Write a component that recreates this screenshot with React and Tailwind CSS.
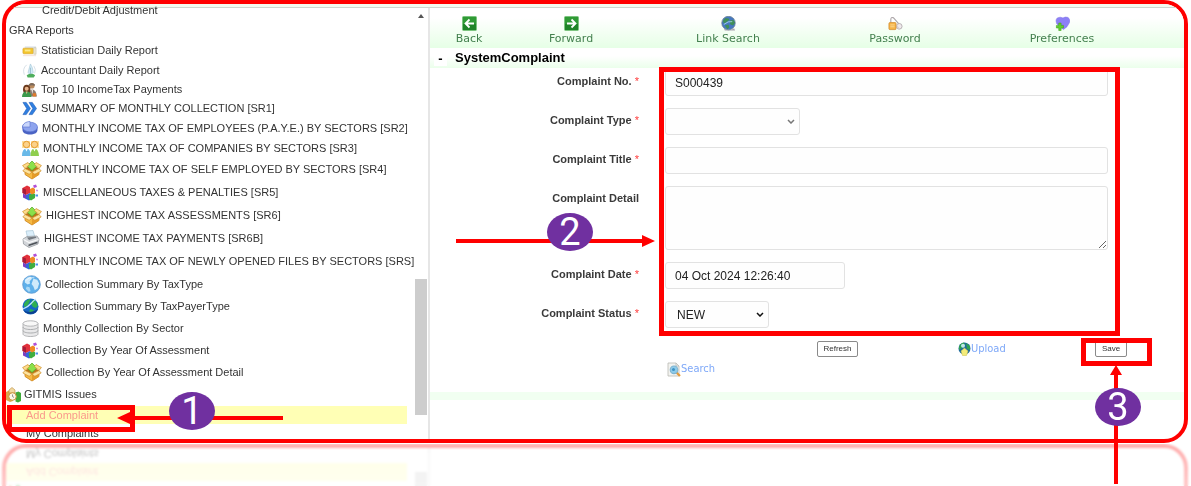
import React from 'react';

/* ---------- icons ---------- */

function TicketIcon({ className }) {
  return (
    <svg viewBox="0 0 16 16" className={className} aria-hidden="true">
      <rect x="3" y="3.500" width="12" height="3" fill="#dfe6ee" />
      <rect x="1" y="5.500" width="11" height="6" rx="1" fill="#f3c52b" stroke="#d9a52b" strokeWidth=".7" />
      <rect x="3" y="7" width="6" height="2" fill="#fbe98a" />
      <path d="M12.500 5H15v7h-2.500z" fill="#efe9d2" stroke="#b9b49a" strokeWidth=".5" />
      <path d="M1 13.500h14" stroke="#f2dfd8" />
    </svg>
  );
}

function AntennaIcon({ className }) {
  return (
    <svg viewBox="0 0 16 16" className={className} aria-hidden="true">
      <path d="M5 2Q0 6 2.500 12.500M12.500 3q3 4 1 8" fill="none" stroke="#d4dfe6" />
      <path d="M9 1l2 4 1 5-3 3-2.500-3L8 4.500z" fill="#d3ebf6" stroke="#9fc3d4" strokeWidth=".6" />
      <path d="M5 13q5-3 9 0l-1.500 2.500H6z" fill="#4fae5c" />
      <path d="M9 5v7" stroke="#7fa9bd" strokeWidth=".7" />
    </svg>
  );
}

function PeopleIcon({ className }) {
  return (
    <svg viewBox="0 0 16 16" className={className} aria-hidden="true">
      <circle cx="10.500" cy="4" r="3" fill="#b98a5e" />
      <path d="M7 3q3.500-4 7 0l-.5 1q-3-1-6 0z" fill="#7b6a5c" />
      <path d="M7 15.500Q7 8 11 8t5 7.500z" fill="#8a7b70" />
      <path d="M10 8l1 5 1-5z" fill="#e9e2da" />
      <path d="M1 8.500Q1 3 5 3t4 5.500L8 12H2z" fill="#6b3a1d" />
      <circle cx="5" cy="7.200" r="2.100" fill="#e8b58c" />
      <path d="M0 16q0-6 5-6t5 6z" fill="#3c9a4c" />
      <path d="M4 10l1 3 1-3z" fill="#e8b58c" />
      <path d="M11.500 12H15v3.500h-3.500z" fill="#e07b2c" />
    </svg>
  );
}

function ChevronsIcon({ className }) {
  return (
    <svg viewBox="0 0 16 16" className={className} aria-hidden="true">
      <path d="M1 1.500h3.500L9 8l-4.500 6.500H1L5 8z" fill="#2f7fe0" stroke="#1d59b5" strokeWidth=".6" />
      <path d="M7.500 1.500H11L15.500 8 11 14.500H7.500l4-6.500z" fill="#2f7fe0" stroke="#1d59b5" strokeWidth=".6" />
    </svg>
  );
}

function PieIcon({ className }) {
  return (
    <svg viewBox="0 0 16 16" className={className} aria-hidden="true">
      <path d="M.5 7v3c0 3 3.500 4.500 7.500 4.500s7.500-1.500 7.500-4.500V7z" fill="#4a63c4" />
      <ellipse cx="8" cy="7" rx="7.500" ry="4.800" fill="#8ea4ee" stroke="#5871cf" strokeWidth=".6" />
      <path d="M8 7V1.500C4 1.500.5 4 .5 7z" fill="#c9d6fb" stroke="#5871cf" strokeWidth=".6" />
    </svg>
  );
}

function PairIcon({ className }) {
  return (
    <svg viewBox="0 0 17 16" className={className} aria-hidden="true">
      <path d="M0 1h8v7H0zM9 1h8v7H9z" fill="#fbdf9c" />
      <circle cx="4.500" cy="4.500" r="3.200" fill="#fbd28a" stroke="#e79a2c" strokeWidth="1" />
      <circle cx="12.500" cy="4.500" r="3.200" fill="#fbd28a" stroke="#e79a2c" strokeWidth="1" />
      <path d="M0 16q0-7.500 4.500-7.500t4 7.500z" fill="#69b9e8" />
      <path d="M8.500 16q0-7.500 4-7.500T17 16z" fill="#8fce4e" />
      <path d="M3 8.500l1.500 3 1.500-3zM11 8.500l1.500 3 1.500-3z" fill="#fff" />
    </svg>
  );
}

function BoxIcon({ className }) {
  return (
    <svg viewBox="0 0 20 20" className={className} aria-hidden="true">
      <path d="M3 8.500l7 3.500 7-3.500v6L10 19l-7-4.500z" fill="#f5b942" stroke="#c9801c" strokeWidth=".8" />
      <path d="M10 12v7l7-4.500v-6z" fill="#e59c2a" />
      <path d="M3 8.500L10 4.500l7 4-7 3.500z" fill="#b9741a" />
      <path d="M10 1l5 5-5 4.500L5 6z" fill="#8be04a" stroke="#4fa525" strokeWidth=".7" />
      <path d="M3 8.500L.6 5.500 6 2.500l1.500 2zM17 8.500l2.400-3L14 2.500l-1.500 2z" fill="#fcdc8a" stroke="#d08f2a" strokeWidth=".7" />
      <path d="M3 8.500L.8 11l6.400 3.300L10 12zM17 8.500l2.200 2.500-6.400 3.300L10 12z" fill="#fde3a0" stroke="#d08f2a" strokeWidth=".7" />
    </svg>
  );
}

function BlocksIcon({ className }) {
  return (
    <svg viewBox="0 0 17 17" className={className} aria-hidden="true">
      <path d="M.5 4l4.500-2.500L8 3v6L4 11 .5 9z" fill="#e2323c" />
      <path d="M.5 4L4 5.500V11L.5 9z" fill="#a81c38" />
      <path d="M1 9.500L4 11v4l-3-1.500z" fill="#7a3fc0" />
      <path d="M4 11l4-2 2 1.500V15l-3 1.500L4 15z" fill="#3566d8" />
      <path d="M7 11l4-2 2 1v4l-4 2.500L7 15z" fill="#3fae3f" />
      <path d="M8 5l3-1.500L13 5v4l-3 1.500L8 9z" fill="#f08a24" />
      <path d="M11 1.500l3-1 1 2.500-3 1z" fill="#b14fd8" />
      <path d="M14.500 5.500l1.500.5-.5 1.500-1.500-.5z" fill="#cf7be6" />
      <path d="M13.500 10.500h2.500v2h-2.500z" fill="#4c8fe8" />
    </svg>
  );
}

function PrinterIcon({ className }) {
  return (
    <svg viewBox="0 0 18 18" className={className} aria-hidden="true">
      <path d="M4 1l7-.5 2 7-7 2z" fill="#dbeefa" stroke="#9dbdd0" strokeWidth=".6" />
      <path d="M1 9l4-2.500 10-.5 2 3-1 5-9 3.500L1.500 14z" fill="#d3d6da" stroke="#8b9096" strokeWidth=".7" />
      <path d="M1.500 9.500L7 12.500l9.500-3" fill="none" stroke="#f7f8f9" strokeWidth="1.200" />
      <path d="M6.500 14.500l9-3v1.800l-9 3z" fill="#4e5359" />
      <path d="M5 7.500l8.500-1 1 1.200L7 10z" fill="#747a81" />
    </svg>
  );
}

function SkyGlobeIcon({ className }) {
  return (
    <svg viewBox="0 0 20 20" className={className} aria-hidden="true">
      <circle cx="10" cy="10" r="9.300" fill="#5fb0ea" stroke="#5a97cf" strokeWidth=".8" />
      <path d="M3 5q3-3.500 6.500-3l1 2-2.500 2.500L8.500 9 6 10 3 8zM12 4l4 1 2 4-1.500 5-3 2-1.500-4L10 9.500z" fill="#cfeafb" />
      <path d="M5 12l3 1 1 4-2 .5-3-3z" fill="#a9d8f5" />
      <path d="M4 6Q7 2 13 3" fill="none" stroke="#fff" strokeWidth="1" opacity=".7" />
    </svg>
  );
}

function DeepGlobeIcon({ className }) {
  return (
    <svg viewBox="0 0 17 17" className={className} aria-hidden="true">
      <circle cx="8.500" cy="8.500" r="8" fill="#1668c4" />
      <path d="M2 6q2-4.500 6.500-5l-1 3-2 3.500L2 9zM10 2l3.500 1L16 7.500l-2 2.500-3-1-2-3zM8 11l4 1-2 3.500-3-.5z" fill="#2faf52" />
      <path d="M1 11Q6 9 9 5.500T14 1" fill="none" stroke="#bfe8fb" strokeWidth="1.300" />
      <path d="M1 12q3 4 8 4t7-5q-4 3-8 3t-7-2z" fill="#0c3f90" />
    </svg>
  );
}

function DatabaseIcon({ className }) {
  return (
    <svg viewBox="0 0 17 17" className={className} aria-hidden="true">
      <path d="M1 3.500v10.500c0 1.500 3.300 2.500 7.500 2.500s7.500-1 7.500-2.500V3.500z" fill="#e9e9ea" stroke="#a4a6a8" strokeWidth=".8" />
      <path d="M1 7c0 1.500 3.300 2.500 7.500 2.500S16 8.500 16 7M1 10.500C1 12 4.300 13 8.500 13s7.500-1 7.500-2.500" fill="none" stroke="#a4a6a8" strokeWidth=".9" />
      <ellipse cx="8.500" cy="3.500" rx="7.500" ry="2.700" fill="#f8f8f8" stroke="#a4a6a8" strokeWidth=".8" />
    </svg>
  );
}

function IssuesIcon({ className }) {
  return (
    <svg viewBox="0 0 15 16" className={className} aria-hidden="true">
      <path d="M0 5l4-2 3 2v9l-3 1-4-2z" fill="#dba84e" />
      <path d="M3 3l3-2.500 3 2.500v3H3z" fill="#f2d9a0" stroke="#b98b3c" strokeWidth=".6" />
      <path d="M9.500 5.500l3-1L15 6v8l-3 1.500-2.500-1z" fill="#3faa3a" />
      <circle cx="6.500" cy="9.500" r="3.800" fill="#fdf7e6" stroke="#c89238" strokeWidth="1" />
      <path d="M6.500 7.500v2l1.500 1" fill="none" stroke="#777" strokeWidth=".8" />
    </svg>
  );
}

function ArrowTile({ className, forward }) {
  return (
    <svg viewBox="0 0 15 15" className={className} aria-hidden="true">
      <rect x=".5" y=".5" width="14" height="14" rx="1" fill="#2f9a35" stroke="#7cc47f" />
      <path d="M1 8h13v6H1z" fill="#1f8428" />
      <path
        d={forward ? 'M3 7.500h8.500M7.500 3.500l4 4-4 4' : 'M12 7.500H3.500M7.500 3.500l-4 4 4 4'}
        fill="none"
        stroke="#fff"
        strokeWidth="1.800"
      />
    </svg>
  );
}

const BackIcon = ({ className }) => <ArrowTile className={className} />;
const ForwardIcon = ({ className }) => <ArrowTile className={className} forward />;

function LinkGlobeIcon({ className }) {
  return (
    <svg viewBox="0 0 16 16" className={className} aria-hidden="true">
      <path d="M3 13q5 4 11 0l1 2.500H4z" fill="#a9a3b0" />
      <circle cx="8" cy="7.500" r="7.200" fill="#4677c2" stroke="#69808f" strokeWidth=".8" />
      <path d="M2 5l3-3 4 1-1 2-3 2-2 1zM9 5l4-1 2 3-2 3-3-1zM4 10l4-1 1 3-2 2z" fill="#3f8f57" />
      <path d="M3 9q5-4 9-3" fill="none" stroke="#a9d6ee" strokeWidth=".9" />
    </svg>
  );
}

function PasswordIcon({ className }) {
  return (
    <svg viewBox="0 0 16 16" className={className} aria-hidden="true">
      <path d="M3 7V4q0-3.500 3-2l6 7" fill="none" stroke="#aaa4a7" strokeWidth="1.200" />
      <circle cx="12" cy="11" r="3" fill="#efeaec" stroke="#b5aeb1" strokeWidth="1" />
      <path d="M7 8l5 6" stroke="#d3cdd0" strokeWidth="1.500" />
      <rect x="1" y="7" width="7.500" height="7.500" rx="1" fill="#f6b546" stroke="#d18a2c" strokeWidth=".8" />
      <path d="M2.500 9.500H7M2.500 11.500H7" stroke="#fbd894" />
    </svg>
  );
}

function PreferencesIcon({ className }) {
  return (
    <svg viewBox="0 0 16 16" className={className} aria-hidden="true">
      <path d="M9 14.500L2 8.500Q0 4 2.500 2q3-1.500 6 0Q11 .5 14 1.500q2.500 2 1.500 5.500-2 5-6.500 7.500z" fill="#8d80f6" stroke="#7b6de6" strokeWidth=".5" />
      <path d="M4 7.500h2.500V10H9v2.800H6.500V15.500H4v-2.700H1.500V10H4z" fill="#63cf2e" stroke="#3f9f1c" strokeWidth=".6" />
    </svg>
  );
}

function UploadIcon({ className }) {
  return (
    <svg viewBox="0 0 13 14" className={className} aria-hidden="true">
      <circle cx="6.500" cy="6.500" r="6" fill="#1f6c9c" />
      <path d="M1 5q1-4 5-4.500L7 3 4 6 1 8zM8 1l4 3v4l-3-1z" fill="#2fa152" />
      <circle cx="5" cy="3.800" r="2" fill="#bfe9e6" />
      <path d="M6.500 6l3.500 3-1.500 4.500h-4L3 9z" fill="#f4ec7a" stroke="#c9c04a" strokeWidth=".5" />
    </svg>
  );
}

function SearchPageIcon({ className }) {
  return (
    <svg viewBox="0 0 14 15" className={className} aria-hidden="true">
      <path d="M1 1h8l3 3v10H1z" fill="#f3f3f0" stroke="#b9b9b2" strokeWidth=".8" />
      <path d="M9 1v3h3" fill="none" stroke="#b9b9b2" strokeWidth=".8" />
      <path d="M9.500 10.500l3.500 3.500" stroke="#e39a3c" strokeWidth="2.200" />
      <circle cx="7" cy="7.800" r="3.800" fill="#8ecbea" stroke="#7fb4d0" strokeWidth="1.100" />
      <circle cx="6.500" cy="7.500" r="1.500" fill="#3f93c4" />
    </svg>
  );
}

/* ---------- data ---------- */

const reports = [
  { label: 'Statistician Daily Report', Icon: TicketIcon, size: 'size-[15px]', row: 'h-5' },
  { label: 'Accountant Daily Report', Icon: AntennaIcon, size: 'size-[15px]', row: 'h-5' },
  { label: 'Top 10 IncomeTax Payments', Icon: PeopleIcon, size: 'size-[15px]', row: 'h-[19px]' },
  { label: 'SUMMARY OF MONTHLY COLLECTION [SR1]', Icon: ChevronsIcon, size: 'size-[15px]', row: 'h-[19px]' },
  { label: 'MONTHLY INCOME TAX OF EMPLOYEES (P.A.Y.E.) BY SECTORS [SR2]', Icon: PieIcon, size: 'size-4', row: 'h-5' },
  { label: 'MONTHLY INCOME TAX OF COMPANIES BY SECTORS [SR3]', Icon: PairIcon, size: 'h-4 w-[17px]', row: 'h-5' },
  { label: 'MONTHLY INCOME TAX OF SELF EMPLOYED BY SECTORS [SR4]', Icon: BoxIcon, size: 'size-5', row: 'h-[23px]' },
  { label: 'MISCELLANEOUS TAXES & PENALTIES [SR5]', Icon: BlocksIcon, size: 'size-[17px]', row: 'h-[23px]' },
  { label: 'HIGHEST INCOME TAX ASSESSMENTS [SR6]', Icon: BoxIcon, size: 'size-5', row: 'h-[23px]' },
  { label: 'HIGHEST INCOME TAX PAYMENTS [SR6B]', Icon: PrinterIcon, size: 'size-[18px]', row: 'h-[23px]' },
  { label: 'MONTHLY INCOME TAX OF NEWLY OPENED FILES BY SECTORS [SRS]', Icon: BlocksIcon, size: 'size-[17px]', row: 'h-[23px]' },
  { label: 'Collection Summary By TaxType', Icon: SkyGlobeIcon, size: 'size-[19px]', row: 'h-[22px]' },
  { label: 'Collection Summary By TaxPayerType', Icon: DeepGlobeIcon, size: 'size-[17px]', row: 'h-[22px]' },
  { label: 'Monthly Collection By Sector', Icon: DatabaseIcon, size: 'size-[17px]', row: 'h-[22px]' },
  { label: 'Collection By Year Of Assessment', Icon: BlocksIcon, size: 'size-[17px]', row: 'h-[22px]' },
  { label: 'Collection By Year Of Assessment Detail', Icon: BoxIcon, size: 'size-5', row: 'h-[22px]' },
];

const tools = [
  { label: 'Back', Icon: BackIcon },
  { label: 'Forward', Icon: ForwardIcon },
  { label: 'Link Search', Icon: LinkGlobeIcon },
  { label: 'Password', Icon: PasswordIcon },
  { label: 'Preferences', Icon: PreferencesIcon },
];

/* ---------- parts ---------- */

function Sidebar() {
  return (
    <aside className="flex w-[424px] shrink-0 border-r-2 border-[#e6e6e6] text-[11px] text-[#333]">
      <nav className="-mt-2 -mb-[3px] min-w-0 flex-1 whitespace-nowrap">
        <a href="#credit" className="flex h-5 items-center pl-9">Credit/Debit Adjustment</a>
        <a href="#gra" className="flex h-5 items-center pl-[3px]">GRA Reports</a>
        <ul>
          {reports.map(({ label, Icon, size, row }) => (
            <li key={label}>
              <a href="#report" className={`flex items-center gap-1 pl-4 ${row}`}>
                <Icon className={`shrink-0 ${size}`} />
                {label}
              </a>
            </li>
          ))}
        </ul>
        <a href="#issues" className="flex h-[23px] items-center gap-[3px]">
          <IssuesIcon className="h-4 w-[15px] shrink-0" />
          GITMIS Issues
        </a>
        <a href="#add" className="flex h-[18px] items-center bg-[#ffffb5] pl-5 text-[#fa9a8c]">Add Complaint</a>
        <a href="#mine" className="flex h-[18px] items-center pl-5">My Complaints</a>
      </nav>
      <div className="mr-px ml-2 flex w-3 flex-col items-center pt-1.5 pb-6" aria-hidden="true">
        <svg viewBox="0 0 6 4" className="h-1 w-1.5"><path d="M0 4l3-4 3 4z" fill="#555" /></svg>
        <div className="mt-auto h-[136px] w-full bg-[#cdcdcd]" />
      </div>
    </aside>
  );
}

function Toolbar() {
  return (
    <nav className="grid h-10 grid-cols-[78fr_126fr_188fr_146fr_188fr_28fr] bg-linear-to-b from-white from-25% to-[#e6ffe6] font-['DejaVu_Sans',Verdana,sans-serif] text-[11px] leading-[15px] text-[#44804f]">
      {tools.map(({ label, Icon }) => (
        <a key={label} href="#tool" className="flex flex-col items-center pt-2 whitespace-nowrap">
          <Icon className="size-[15px] shrink-0" />
          {label}
        </a>
      ))}
    </nav>
  );
}

function Field({ id, label, required, children }) {
  return (
    <div className="flex items-start gap-[26px]">
      <label htmlFor={id} className="w-[209px] shrink-0 text-right text-[11px] leading-6 font-bold text-[#3a3a3a]">
        {label}
        {required && <span className="font-normal text-[#ff3b3b]"> *</span>}
      </label>
      {children}
    </div>
  );
}

const control = 'rounded-[3px] border border-[#e2e2e2] bg-[#fefefe] text-[12px] text-[#222] outline-none';

function Select({ id, width, muted, children }) {
  return (
    <div className={`relative ${width}`}>
      <select id={id} className={`${control} block h-[27px] w-full appearance-none pl-[11px]`}>
        {children}
      </select>
      <svg viewBox="0 0 8 5" className="pointer-events-none absolute top-[11px] right-[5px] h-[5px] w-2" aria-hidden="true">
        <path d="M1 1l3 3 3-3" fill="none" stroke={muted ? '#777' : '#111'} strokeWidth="1.500" />
      </svg>
    </div>
  );
}

function ComplaintForm() {
  const button = 'h-4 rounded-[2px] border border-[#8a8a8a] bg-white text-[8px] leading-none text-[#333]';
  const link = "flex items-center font-['DejaVu_Sans_Condensed','DejaVu_Sans',sans-serif] text-[11px] leading-4 text-[#7ea8f8]";
  return (
    <form onSubmit={(e) => e.preventDefault()}>
      <div className="flex flex-col gap-3 pt-px pr-[76px]">
        <Field id="no" label="Complaint No." required>
          <input id="no" defaultValue="S000439" className={`${control} h-[27px] min-w-0 flex-1 px-[9px]`} />
        </Field>
        <Field id="type" label="Complaint Type" required>
          <Select id="type" width="w-[135px]" muted><option></option></Select>
        </Field>
        <Field id="title" label="Complaint Title" required>
          <input id="title" className={`${control} h-[27px] min-w-0 flex-1 px-[9px]`} />
        </Field>
        <Field id="detail" label="Complaint Detail">
          <textarea id="detail" className={`${control} block h-16 min-w-0 flex-1 px-[9px]`} />
        </Field>
        <Field id="date" label="Complaint Date" required>
          <input id="date" defaultValue="04 Oct 2024 12:26:40" className={`${control} h-[27px] w-[180px] px-[9px]`} />
        </Field>
        <Field id="status" label="Complaint Status" required>
          <Select id="status" width="w-[104px]"><option>NEW</option></Select>
        </Field>
      </div>
      <div className="mt-[11px] grid h-5 grid-cols-[387fr_141fr_137fr_89fr] items-center">
        <button type="button" className={`${button} col-start-2 w-[41px]`}>Refresh</button>
        <a href="#upload" className={link}>
          <UploadIcon className="h-3.5 w-[13px]" />
          Upload
        </a>
        <button type="submit" className={`${button} w-8`}>Save</button>
      </div>
      <a href="#search" className={`${link} mt-0.5 ml-[237px] w-fit`}>
        <SearchPageIcon className="h-[15px] w-3.5" />
        Search
      </a>
    </form>
  );
}

function Step({ n, place }) {
  return (
    <span className={`absolute flex h-[38px] w-[46px] items-center justify-center rounded-[50%] bg-[#7030a0] font-['Roboto','Liberation_Sans',sans-serif] text-[38px] leading-none text-white ${place}`}>
      {n}
    </span>
  );
}

function Annotations() {
  return (
    <div className="pointer-events-none">
      <div className="absolute top-[67px] left-[659px] h-[269px] w-[461px] border-5 border-[#f00]" />
      <div className="absolute top-[405px] left-[7px] h-[27px] w-[128px] border-5 border-[#f00]" />
      <div className="absolute top-[338px] left-[1081px] h-[28px] w-[71px] border-5 border-[#f00]" />
      <svg viewBox="0 0 166 12" className="absolute top-[412px] left-[117px] h-3 w-[166px]">
        <path d="M0 6L13 0v4h153v4H13v4z" fill="#f00" />
      </svg>
      <svg viewBox="0 0 199 12" className="absolute top-[235px] left-[456px] h-3 w-[199px]">
        <path d="M199 6L186 0v4H0v4h186v4z" fill="#f00" />
      </svg>
      <svg viewBox="0 0 12 119" className="absolute top-[365px] left-[1110px] h-[119px] w-3">
        <path d="M6 0L0 10h4v109h4V10h4z" fill="#f00" />
      </svg>
      <Step n="1" place="top-[392px] left-[169px]" />
      <Step n="2" place="top-[213px] left-[547px]" />
      <Step n="3" place="top-[388px] left-[1095px]" />
    </div>
  );
}

export default function App() {
  return (
    <div className="relative overflow-hidden bg-white pb-[43px] font-['Liberation_Sans',Arial,sans-serif]">
      <div className="mr-[3px] ml-0.5 overflow-hidden rounded-[24px] border-4 border-[#f00] bg-white [-webkit-box-reflect:below_1px_linear-gradient(transparent_70%,rgba(0,0,0,0.32))]">
        <div className="h-1 border-b border-[#cfd6cf] bg-[#f3fbf0]" />
        <div className="flex">
          <Sidebar />
          <main className="min-w-0 flex-1">
            <Toolbar />
            <header className="flex h-5 items-center bg-linear-to-b from-white from-40% to-[#ebffeb] pl-1 text-[13px] font-bold text-black">
              <button type="button" className="mr-2 h-4 w-[13px] bg-white leading-none" aria-label="Collapse">-</button>
              <h1>SystemComplaint</h1>
            </header>
            <ComplaintForm />
            <div className="mt-[15px] h-2 bg-[#f1fff1]" />
          </main>
        </div>
      </div>
      <div className="absolute inset-x-0 bottom-0 h-[42px] backdrop-blur-[1px]" />
      <Annotations />
    </div>
  );
}
